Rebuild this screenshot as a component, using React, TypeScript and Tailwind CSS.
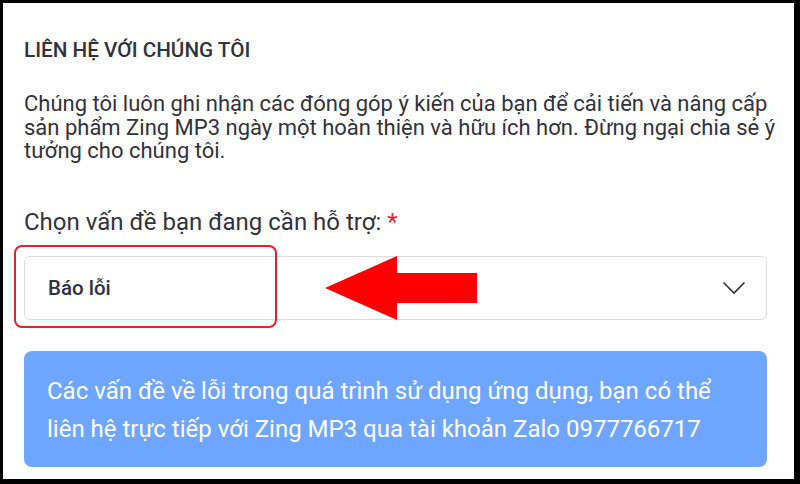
import React from "react";

export default function App() {
  return (
    <div className="relative w-[800px] h-[484px] bg-black pt-[3px] pl-[3px] pr-[6px] pb-[5px]" style={{ fontFamily: "Roboto, 'Noto Sans', sans-serif" }}>
      <div className="w-full h-full bg-white px-[21px] flex flex-col text-[#32323d]">
        <div className="mt-[34px] text-[20.7px] leading-[26px] font-medium">LIÊN HỆ VỚI CHÚNG TÔI</div>
        <p className="mt-[29px] text-[22px] leading-[23.5px] whitespace-nowrap">
          Chúng tôi luôn ghi nhận các đóng góp ý kiến của bạn để cải tiến và nâng cấp
          <br />
          sản phẩm Zing MP3 ngày một hoàn thiện và hữu ích hơn. Đừng ngại chia sẻ ý
          <br />
          tưởng cho chúng tôi.
        </p>
        <div className="mt-[44.5px] text-[24px] leading-[30px]">
          Chọn vấn đề bạn đang cần hỗ trợ: <span className="text-[#e5262c]">*</span>
        </div>
        <div className="mt-[19px] h-[64px] w-[743px] border border-[#dcdcdc] rounded-[6px] flex items-center justify-between pl-[23px] pr-[20px]">
          <span className="text-[20.5px] font-medium">Báo lỗi</span>
          <svg width="24" height="14" viewBox="0 0 24 14" fill="none">
            <path d="M1.5 1.5 L12 12 L22.5 1.5" stroke="#333" strokeWidth="1.6" />
          </svg>
        </div>
        <div className="mt-[31px] w-[743px] h-[116px] bg-[#6ea5ff] rounded-[8px] px-[23px] pt-[21px] pb-[19px] text-white text-[24px] leading-[38px] whitespace-nowrap">
          Các vấn đề về lỗi trong quá trình sử dụng ứng dụng, bạn có thể
          <br />
          liên hệ trực tiếp với Zing MP3 qua tài khoản Zalo 0977766717
        </div>
      </div>
      <div className="absolute left-[14px] top-[245px] w-[263px] h-[83px] border-[2.5px] border-[#e8202a] rounded-[8px]" />
      <svg className="absolute left-[325px] top-[256px]" width="152" height="64" viewBox="0 0 152 64">
        <polygon points="0,32 72,0 72,17 152,17 152,47 72,47 72,64" fill="#ff0000" />
      </svg>
    </div>
  );
}
